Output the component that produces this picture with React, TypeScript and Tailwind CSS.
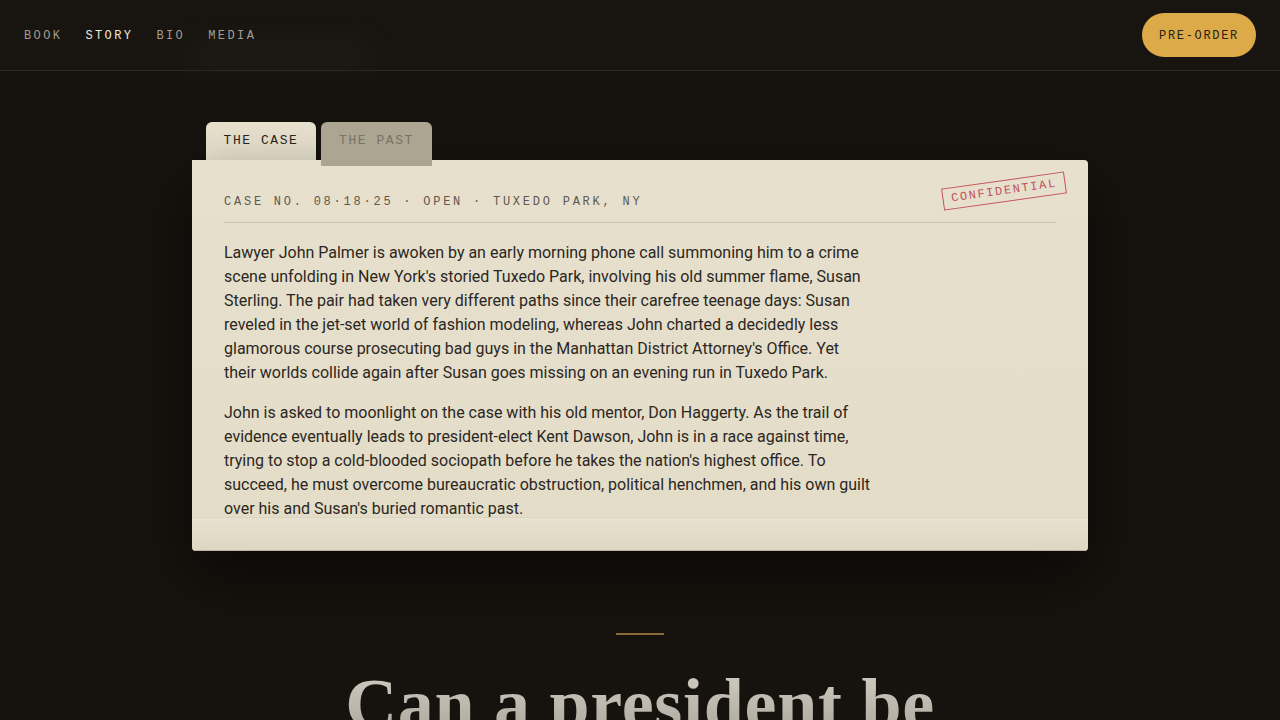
import React, { useState } from "react";

const mono = { fontFamily: '"Liberation Mono", "DejaVu Sans Mono", monospace' };
const sans = { fontFamily: 'Roboto, "Liberation Sans", Arial, sans-serif' };
const serif = { fontFamily: '"Liberation Serif", "DejaVu Serif", serif' };

const navItems = ["BOOK", "STORY", "BIO", "MEDIA"];

function Header() {
  return (
    <header className="relative flex h-[71px] items-center justify-between border-b border-[#2c2822] bg-[#181511] px-6">
      <div className="pointer-events-none absolute left-[190px] top-[44px] h-[22px] w-[180px] rounded-md bg-[#24201a] opacity-60 blur-md" />
      <nav className="relative flex items-center gap-[23px] pt-[2px] text-[12px] tracking-[0.2em]" style={mono}>
        {navItems.map((item) => (
          <a
            key={item}
            href="#"
            className={item === "STORY" ? "text-[#ece8de]" : "text-[#a39d90]"}
          >
            {item}
          </a>
        ))}
      </nav>
      <button
        className="h-11 rounded-full bg-[#dcaa49] px-[17px] pt-px text-[12px] font-medium tracking-[0.14em] text-[#2a2113]"
        style={mono}
      >
        PRE-ORDER
      </button>
    </header>
  );
}

function Stamp() {
  return (
    <div
      className="absolute right-[22px] top-[20px] flex h-[22px] w-[124px] -rotate-[8deg] items-center justify-center border border-[#c4545c] text-[12px] tracking-[0.14em] text-[#c4545c]"
      style={mono}
    >
      CONFIDENTIAL
    </div>
  );
}

function CaseFile() {
  const [tab, setTab] = useState<"case" | "past">("case");
  return (
    <div className="mx-auto w-[896px]">
      <div className="flex items-start gap-[5px] pl-[14px]">
        <button
          onClick={() => setTab("case")}
          className="h-[38px] w-[110px] rounded-t-md bg-[#e8e1ce] text-[13px] tracking-[0.12em] text-[#2a261f]"
          style={mono}
        >
          THE CASE
        </button>
        <button
          onClick={() => setTab("past")}
          className="relative z-10 -mb-[6px] h-[44px] w-[111px] rounded-t-md bg-[#aca591] pb-[6px] text-[13px] tracking-[0.12em] text-[#7a7466]"
          style={mono}
        >
          THE PAST
        </button>
      </div>
      <div className="relative overflow-hidden rounded-[4px] rounded-tl-none bg-gradient-to-b from-[#e7e0cd] to-[#e3dcc7] px-8 pb-[30px] pt-[34px] shadow-[0_24px_60px_rgba(0,0,0,0.55)]">
        <Stamp />
        <div
          className="border-b border-[#cdc5b1] pb-[12px] text-[12px] leading-4 tracking-[0.23em] text-[#5e594f]"
          style={mono}
        >
          CASE NO. 08·18·25 · OPEN · TUXEDO PARK, NY
        </div>
        <div className="relative z-10 mt-[18px] flex max-w-[648px] flex-col gap-4 text-[16px] leading-6 text-[#2b271f]" style={sans}>
          <p>
            Lawyer John Palmer is awoken by an early morning phone call summoning him to a crime scene
            unfolding in New York's storied Tuxedo Park, involving his old summer flame, Susan Sterling.
            The pair had taken very different paths since their carefree teenage days: Susan reveled in
            the jet-set world of fashion modeling, whereas John charted a decidedly less glamorous course
            prosecuting bad guys in the Manhattan District Attorney's Office. Yet their worlds collide
            again after Susan goes missing on an evening run in Tuxedo Park.
          </p>
          <p>
            John is asked to moonlight on the case with his old mentor, Don Haggerty. As the trail of
            evidence eventually leads to president-elect Kent Dawson, John is in a race against time,
            trying to stop a cold-blooded sociopath before he takes the nation's highest office. To
            succeed, he must overcome bureaucratic obstruction, political henchmen, and his own guilt
            over his and Susan's buried romantic past.
          </p>
        </div>
        {/* soft paper fold along the bottom edge */}
        <div className="pointer-events-none absolute inset-x-0 bottom-0 h-[34px] border-t border-[#d8d1bd]/50 bg-gradient-to-b from-white/15 to-[#d9d2bd]/60" />
        <div className="pointer-events-none absolute inset-x-0 bottom-0 h-px bg-[#bcb49d]" />
      </div>
    </div>
  );
}

export default function App() {
  return (
    <div className="min-h-screen overflow-hidden bg-[#16130e]">
      <Header />
      <main className="pt-[51px]">
        <CaseFile />
        <section className="mt-[82px] flex flex-col items-center">
          <div className="h-[2px] w-12 bg-[#8c6c35]" />
          <h2
            className="mt-[30px] bg-gradient-to-b from-[#d3cfc5] to-[#a7a397] bg-clip-text text-[72px] font-bold leading-[1.1] tracking-[0.01em] text-transparent"
            style={serif}
          >
            Can a president be
          </h2>
        </section>
      </main>
    </div>
  );
}
